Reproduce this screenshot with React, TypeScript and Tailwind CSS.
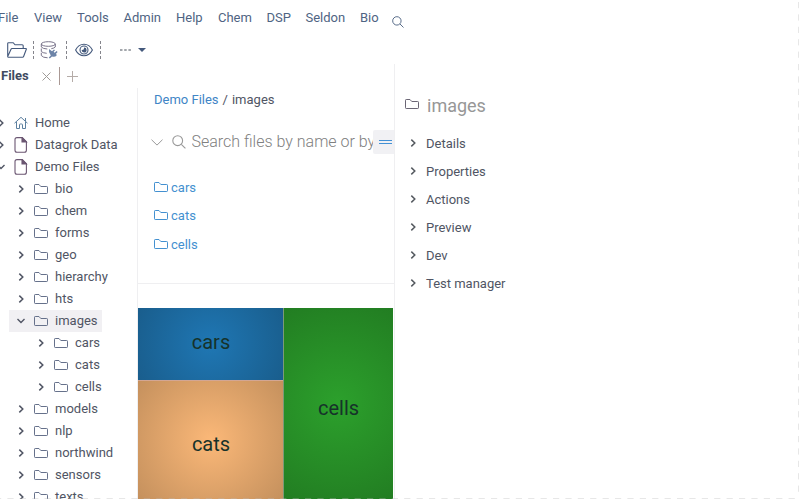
import React from "react";

type IconProps = { className?: string };

const Folder = ({ className = "" }: IconProps) => (
  <svg className={`h-3 w-[14px] shrink-0 ${className}`} viewBox="0 0 14 12" fill="none" stroke="currentColor" strokeWidth="1">
    <path d="M.5 8.8V1.2Q.5 .5 1.2 .5H5L6.8 2.5H12.7Q13.5 2.5 13.5 3.2V8.8Q13.5 9.5 12.8 9.5H1.2Q.5 9.5 .5 8.8Z" />
  </svg>
);

const ChevronRight = ({ className = "" }: IconProps) => (
  <svg className={`h-2 w-[6px] shrink-0 ${className}`} viewBox="0 0 6 8" fill="none" stroke="currentColor" strokeWidth="1.5">
    <path d="M1.3 .6 4.8 4 1.3 7.4" />
  </svg>
);

const ChevronDown = ({ className = "" }: IconProps) => (
  <svg className={`h-[6px] w-2 shrink-0 ${className}`} viewBox="0 0 8 6" fill="none" stroke="currentColor" strokeWidth="1.4">
    <path d="M.5 1 4 4.5 7.5 1" />
  </svg>
);

const Search = ({ className = "" }: IconProps) => (
  <svg className={`shrink-0 ${className}`} viewBox="0 0 14 14" fill="none" stroke="currentColor" strokeWidth="1.1">
    <circle cx="5.7" cy="5.7" r="4.9" />
    <path d="m9.3 9.3 4.1 4.1" />
  </svg>
);

const Home = () => (
  <svg className="h-[14px] w-[14px] shrink-0 text-[#5d809f]" viewBox="0 0 14 14" fill="none" stroke="currentColor" strokeWidth="1">
    <path d="M.5 7.2 7 1.3l6.5 5.9M2.5 5.8v6.7h3V8.8q0-.8.8-.8h1.4q.8 0 .8.8v3.7h3V5.8M11.5 5V2" />
  </svg>
);

const Document = () => (
  <svg className="h-4 w-[14px] shrink-0 text-[#6b5672]" viewBox="0 0 14 16" fill="none" stroke="currentColor" strokeWidth="1.1">
    <path d="M3 .6h5.3l4.1 4.2v8.5q0 2-2 2H3q-2 0-2-2V2.6q0-2 2-2Z" />
    <path d="M8 .6v4.3h4.4Z" fill="currentColor" />
  </svg>
);

const menu = [
  { label: "File", width: "w-[36px]" },
  { label: "View", width: "w-[43px]" },
  { label: "Tools", width: "w-[46.5px]" },
  { label: "Admin", width: "w-[52.5px]" },
  { label: "Help", width: "w-[42px]" },
  { label: "Chem", width: "w-[48.5px]" },
  { label: "DSP", width: "w-[39px]" },
  { label: "Seldon", width: "w-[54.5px]" },
  { label: "Bio", width: "w-[32px]" },
];

type Node = { label: string; level: number; open?: boolean; icon?: "home" | "doc" };
const tree: Node[] = [
  { label: "Home", level: 0, icon: "home" },
  { label: "Datagrok Data", level: 0, icon: "doc" },
  { label: "Demo Files", level: 0, icon: "doc", open: true },
  { label: "bio", level: 1 },
  { label: "chem", level: 1 },
  { label: "forms", level: 1 },
  { label: "geo", level: 1 },
  { label: "hierarchy", level: 1 },
  { label: "hts", level: 1 },
  { label: "images", level: 1, open: true },
  { label: "cars", level: 2 },
  { label: "cats", level: 2 },
  { label: "cells", level: 2 },
  { label: "models", level: 1 },
  { label: "nlp", level: 1 },
  { label: "northwind", level: 1 },
  { label: "sensors", level: 1 },
  { label: "texts", level: 1 },
];

const indents = ["-ml-[11px]", "ml-[9px]", "ml-[29px]"];

function TreeRow({ node }: { node: Node }) {
  return (
    <div
      className={`flex h-[22px] w-fit items-center whitespace-nowrap pr-1 ${indents[node.level]} ${
        node.label === "images" ? "bg-[#f1f0f3]" : ""
      }`}
    >
      <span className="flex w-6 justify-center">
        {node.open ? <ChevronDown /> : <ChevronRight />}
      </span>
      <span className="flex w-[22px] pl-px">
        {node.icon === "home" ? <Home /> : node.icon === "doc" ? <Document /> : <Folder className="mt-[2px] text-[#66718b]" />}
      </span>
      <span>{node.label}</span>
    </div>
  );
}

const DashedDivider = () => (
  <svg className="h-[18px] w-px shrink-0 text-[#85858c]" viewBox="0 0 1 18">
    <path d="M.5 0v18" stroke="currentColor" strokeDasharray="3 2" />
  </svg>
);

function Toolbar() {
  return (
    <div className="flex h-7 items-center pl-[7px] text-[#44597c]">
      <svg className="h-4 w-5" viewBox="0 0 20 16" fill="none" stroke="currentColor" strokeWidth="1.1">
        <path d="M.7 14.5V1.5q0-.8.8-.8h4.7L8 2.8h7.2q1 0 1 1v2.7M.7 14.5 4 7.2q.3-.7 1-.7h13.6q1 0 .7.8l-2.7 7.2q-.3.8-1 .8H1.4q-.7 0-.7-.8Z" />
      </svg>
      <span className="ml-[6px] flex"><DashedDivider /></span>
      <svg className="ml-[6px] h-[18px] w-[18px]" viewBox="0 0 18 18" fill="none" stroke="#7a748b" strokeWidth="1">
        <ellipse cx="8.3" cy="3" rx="7" ry="2.3" />
        <path d="M1.3 3v3q1.5 1.8 6 2M1.3 7.5v3q1.2 1.5 5.4 1.8M1.3 11.8v2.7q1.5 2.2 6.3 2.3M15.3 3v3q-1 1.2-4 1.7" />
        <path d="m9 8 3 2.2 2-1.8 1 .9-1.4 1.4 1.1 1.1L16.5 10l1.1 1-1.8 2 1.2 1q-2.3 2.8-5 1.4l-2.2 2.1-1-1 2-2Q8.2 11 9 8Z" fill="#6d84a8" stroke="none" />
      </svg>
      <span className="ml-[8px] flex"><DashedDivider /></span>
      <svg className="ml-[8px] h-[14px] w-[18px]" viewBox="0 0 18 14" fill="none" stroke="currentColor" strokeWidth="1.1">
        <path d="M.6 7Q3.5 1.3 9 1.3T17.4 7Q14.5 12.7 9 12.7T.6 7Z" />
        <circle cx="9" cy="7" r="4" />
        <path d="M9 4.5v1q0 1.5-2.4 1.5A2.5 2.5 0 1 0 9 4.5Z" fill="currentColor" stroke="none" />
      </svg>
      <span className="ml-[7px] flex"><DashedDivider /></span>
      <svg className="ml-[19px] h-[2px] w-[11px] text-[#a3a7ac]" viewBox="0 0 11 2" fill="currentColor">
        <path d="M0 0h2.5v2H0zM4.2 0h2.5v2H4.2zM8.4 0h2.5v2H8.4z" />
      </svg>
      <svg className="ml-[7px] h-1 w-2" viewBox="0 0 8 4" fill="currentColor">
        <path d="M0 0h8L4 4Z" />
      </svg>
    </div>
  );
}

const files = [
  { label: "cars", height: "h-7" },
  { label: "cats", height: "h-7" },
  { label: "cells", height: "h-[29px] pt-px" },
];
const sections = ["Details", "Properties", "Actions", "Preview", "Dev", "Test manager"];

export default function App() {
  return (
    <div className="relative flex h-[499px] w-[799px] flex-col overflow-hidden bg-white font-['Roboto',sans-serif] text-[13px] leading-[18px] text-[#505564]">
      <header className="h-16 shrink-0">
        <nav className="-ml-[2px] flex h-9 items-center text-[#4f6483]">
          {menu.map((m) => (
            <span key={m.label} className={`shrink-0 ${m.width}`}>{m.label}</span>
          ))}
          <Search className="mt-[8px] h-3 w-3" />
        </nav>
        <Toolbar />
      </header>

      <div className="flex min-h-0 flex-1">
        <div className="flex w-[394px] shrink-0 flex-col">
          <div className="flex h-6 shrink-0 items-center pl-px">
            <span className="w-[41px] font-bold text-[#404b61]">Files</span>
            <svg className="h-[9px] w-[9px] text-[#9f9b98]" viewBox="0 0 9 9" stroke="currentColor">
              <path d="m.5.5 8 8m0-8-8 8" />
            </svg>
            <span className="ml-[8px] h-[18px] w-px bg-[#a99894]" />
            <svg className="ml-[7px] h-[11px] w-[11px] text-[#b5aca8]" viewBox="0 0 11 11" stroke="currentColor">
              <path d="M5.5 0v11M0 5.5h11" />
            </svg>
          </div>

          <div className="flex min-h-0 flex-1">
            <aside className="w-[138px] shrink-0 overflow-hidden border-r border-[#efeff1] pt-6">
              {tree.map((n, i) => <TreeRow key={i} node={n} />)}
            </aside>

            <main className="flex min-w-0 flex-1 flex-col">
              <div className="flex h-[195px] shrink-0 flex-col">
                <div className="flex h-6 items-center gap-1 pl-4">
                  <span className="text-[#4085c6]">Demo Files</span>
                  <span>/</span>
                  <span>images</span>
                </div>
                <div className="mt-[18px] flex h-6 items-center pl-[13px] text-[#999]">
                  <svg className="h-[7px] w-3 shrink-0" viewBox="0 0 12 7" fill="none" stroke="currentColor">
                    <path d="m.5.7 5.5 5.4L11.5 .7" />
                  </svg>
                  <Search className="ml-[9px] h-[14px] w-[14px]" />
                  <span className="ml-[5.5px] w-[181.5px] overflow-hidden whitespace-nowrap text-base font-light leading-6 text-[#808080]">
                    Search files by name or by
                  </span>
                  <span className="flex h-6 w-[21px] shrink-0 flex-col justify-center gap-[2px] rounded-l-[2px] bg-[#f1f1f4] pl-[6px]">
                    <i className="h-px w-[13px] bg-[#4391d5]" />
                    <i className="h-px w-[13px] bg-[#4391d5]" />
                  </span>
                </div>
                <div className="mt-5 text-[#4390d0]">
                  {files.map((f) => (
                    <div key={f.label} className={`flex items-center pl-4 ${f.height}`}>
                      <Folder />
                      <span className="ml-[3px]">{f.label}</span>
                    </div>
                  ))}
                </div>
              </div>
              <div className="flex min-h-0 flex-1 border-t border-[#efeff1] pt-6 text-xl text-[#16322a]">
                <div className="flex w-[146px] flex-col border-r border-[#7a9a78]">
                  <div className="flex h-[72px] shrink-0 items-center justify-center bg-[radial-gradient(circle_at_center,#1f77b4_0px,#195d8c_82px)] pb-1 pl-px">cars</div>
                  <div className="flex flex-1 items-center justify-center border-t border-[#d3a693] bg-[radial-gradient(circle_at_center,#fbb878_0px,#c4905d_94px)] pl-px pt-[7px]">cats</div>
                </div>
                <div className="flex w-[109px] items-center justify-center bg-[radial-gradient(circle_at_center,#2ca02c_0px,#227d22_110px)] pt-[9px]">cells</div>
              </div>
            </main>
          </div>
        </div>

        <section className="flex-1 border-l border-[#efeff1] pt-[30px]">
          <div className="flex h-6 items-center pl-[10px]">
            <Folder className="-mt-[2px] text-[#6b6675]" />
            <h1 className="ml-2 text-lg text-[#979797]">images</h1>
          </div>
          <div className="pt-3">
            {sections.map((s) => (
              <div key={s} className="flex h-7 items-center pl-[15px]">
                <ChevronRight className="mb-[2px] text-[#555a60]" />
                <span className="ml-[10px]">{s}</span>
              </div>
            ))}
          </div>
        </section>
      </div>

      <svg className="pointer-events-none absolute inset-0 h-full w-full" viewBox="0 0 799 499" fill="none" stroke="#bbb" strokeOpacity=".35" strokeDasharray="6.2 6.2">
        <path d="M798.5 2v495M-5 498.5H799" />
      </svg>
    </div>
  );
}
